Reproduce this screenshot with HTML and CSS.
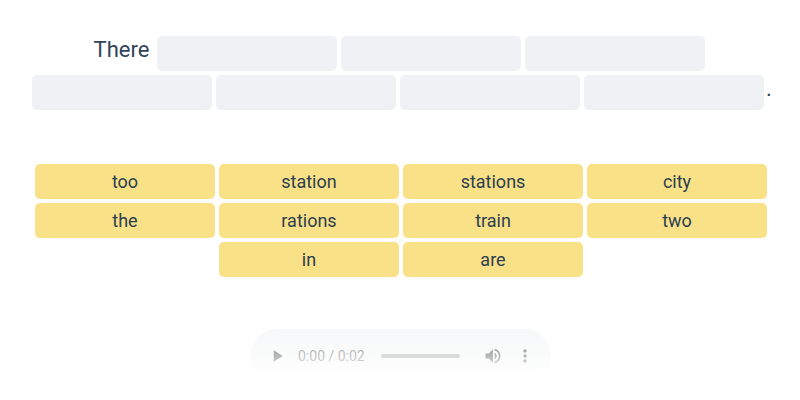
FILE: index.html
```html
<!DOCTYPE html>
<html lang="en">
<head>
<meta charset="utf-8">
<title>Build the sentence</title>
<link rel="stylesheet" href="styles.css">
</head>
<body>
<main class="exercise">
  <section class="sentence">
    <div class="line line-first">
      <span class="given">There</span>
      <span class="slot"></span><span class="slot"></span><span class="slot"></span>
    </div>
    <div class="line">
      <span class="slot"></span><span class="slot"></span><span class="slot"></span><span class="slot"></span>
      <span class="stop">.</span>
    </div>
  </section>
  <section class="words">
    <span class="word">too</span>
    <span class="word">station</span>
    <span class="word">stations</span>
    <span class="word">city</span>
    <span class="word">the</span>
    <span class="word">rations</span>
    <span class="word">train</span>
    <span class="word">two</span>
    <span class="word">in</span>
    <span class="word">are</span>
  </section>
  <section class="player">
    <svg class="play" width="20" height="20" viewBox="0 0 24 24"><path d="M8 5v14l11-7z"/></svg>
    <span class="time">0:00 / 0:02</span>
    <span class="track"></span>
    <svg class="volume" width="20" height="20" viewBox="0 0 24 24"><path d="M3 9v6h4l5 5V4L7 9H3zm13.500 3c0-1.770-1.020-3.290-2.500-4.030v8.050c1.480-.73 2.500-2.250 2.500-4.020zM14 3.230v2.060c2.890.86 5 3.540 5 6.710s-2.110 5.850-5 6.710v2.060c4.010-.91 7-4.490 7-8.770s-2.990-7.860-7-8.770z"/></svg>
    <svg class="more" width="20" height="20" viewBox="0 0 24 24"><path d="M12 8c1.100 0 2-.9 2-2s-.9-2-2-2-2 .9-2 2 .9 2 2 2zm0 2c-1.100 0-2 .9-2 2s.9 2 2 2 2-.9 2-2-.9-2-2-2zm0 6c-1.100 0-2 .9-2 2s.9 2 2 2 2-.9 2-2-.9-2-2-2z"/></svg>
  </section>
</main>
</body>
</html>
```
FILE: styles.css
```css
* {
  box-sizing: border-box;
}

body {
  margin: 0;
  background: #fff;
  color: #2f4459;
  font-family: Roboto, "Liberation Sans", sans-serif;
}

.exercise {
  display: flex;
  flex-direction: column;
  height: 400px;
  padding-top: 36px;
  overflow: hidden;
}

.sentence {
  display: flex;
  flex-direction: column;
  gap: 4px;
}

.line {
  display: flex;
  justify-content: center;
  gap: 4px;
  height: 35px;
  padding-left: 2px;
  font-size: 22px;
  line-height: 27px;
}

.line-first {
  padding: 0 2px 0 0;
}

.given {
  width: 57px;
  margin-right: 2px;
}

.slot {
  width: 180px;
  height: 35px;
  border-radius: 5px;
  background: #f0f1f5;
}

.stop {
  width: 4px;
  margin-left: -2px;
}

.words {
  display: flex;
  flex-wrap: wrap;
  justify-content: center;
  gap: 4px;
  margin-top: 54px;
  padding-left: 2px;
}

.word {
  width: 180px;
  height: 35px;
  border-radius: 5px;
  background: #f9e187;
  color: #2c3e50;
  font-size: 18px;
  line-height: 35px;
  text-align: center;
}

.player {
  position: relative;
  display: flex;
  align-items: center;
  width: 300px;
  height: 54px;
  margin: 52px 0 0 251px;
  padding-left: 16px;
  border-radius: 27px;
  overflow: hidden;
  background: #f1f3f4;
  color: #333;
}

/* Fades the player out towards the bottom of the page. */
.player::after {
  content: "";
  position: absolute;
  inset: 0;
  background: linear-gradient(rgba(255, 255, 255, 0.35), #fff 50px);
}

.time {
  width: 70px;
  margin-left: 11px;
  font-size: 14px;
  white-space: nowrap;
}

.track {
  width: 79px;
  height: 4px;
  margin-left: 13px;
  border-radius: 2px;
  background: #888;
}

.volume {
  margin-left: 23px;
}

.more {
  margin-left: 12px;
}

.play,
.volume,
.more {
  fill: #111;
}
```
